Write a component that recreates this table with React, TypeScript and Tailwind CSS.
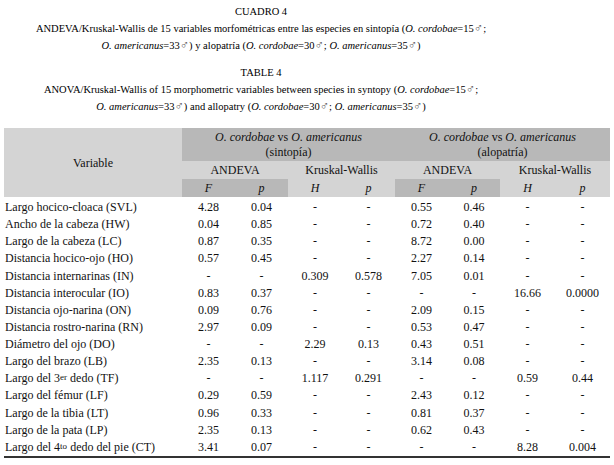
import React from 'react';

type Row = {
  label: React.ReactNode;
  values: string[];
};

const rows: Row[] = [
  { label: 'Largo hocico-cloaca (SVL)', values: ['4.28', '0.04', '-', '-', '0.55', '0.46', '-', '-'] },
  { label: 'Ancho de la cabeza (HW)', values: ['0.04', '0.85', '-', '-', '0.72', '0.40', '-', '-'] },
  { label: 'Largo de la cabeza (LC)', values: ['0.87', '0.35', '-', '-', '8.72', '0.00', '-', '-'] },
  { label: 'Distancia hocico-ojo (HO)', values: ['0.57', '0.45', '-', '-', '2.27', '0.14', '-', '-'] },
  { label: 'Distancia internarinas (IN)', values: ['-', '-', '0.309', '0.578', '7.05', '0.01', '-', '-'] },
  { label: 'Distancia interocular (IO)', values: ['0.83', '0.37', '-', '-', '-', '-', '16.66', '0.0000'] },
  { label: 'Distancia ojo-narina (ON)', values: ['0.09', '0.76', '-', '-', '2.09', '0.15', '-', '-'] },
  { label: 'Distancia rostro-narina (RN)', values: ['2.97', '0.09', '-', '-', '0.53', '0.47', '-', '-'] },
  { label: 'Diámetro del ojo (DO)', values: ['-', '-', '2.29', '0.13', '0.43', '0.51', '-', '-'] },
  { label: 'Largo del brazo (LB)', values: ['2.35', '0.13', '-', '-', '3.14', '0.08', '-', '-'] },
  {
    label: (
      <>
        Largo del 3<sup className="text-[9px] relative top-[-2px]">er</sup> dedo (TF)
      </>
    ),
    values: ['-', '-', '1.117', '0.291', '-', '-', '0.59', '0.44'],
  },
  { label: 'Largo del fémur (LF)', values: ['0.29', '0.59', '-', '-', '2.43', '0.12', '-', '-'] },
  { label: 'Largo de la tibia (LT)', values: ['0.96', '0.33', '-', '-', '0.81', '0.37', '-', '-'] },
  { label: 'Largo de la pata (LP)', values: ['2.35', '0.13', '-', '-', '0.62', '0.43', '-', '-'] },
  {
    label: (
      <>
        Largo del 4<sup className="text-[9px] relative top-[-2px]">to</sup> dedo del pie (CT)
      </>
    ),
    values: ['3.41', '0.07', '-', '-', '-', '-', '8.28', '0.004'],
  },
];

// thin outlined male sign, as in the original PDF export
const Male = () => (
  <span className="[font-family:'DejaVu_Sans',sans-serif] text-[12.5px] leading-none font-extralight text-[#555]">♂</span>
);

const Species = ({ children }: { children: React.ReactNode }) => <i>{children}</i>;

const Caption = ({ title, children }: { title: string; children: React.ReactNode }) => (
  <div className="w-[522px] text-center text-[10.5px] leading-[17px] text-black">
    <div>{title}</div>
    <div>{children}</div>
  </div>
);

export default function App() {
  const light = 'bg-[#d4d4d4]';
  const dark = 'bg-[#b8b8b8]';

  return (
    <div className="w-[614px] h-[465px] bg-white text-[#111] text-[12px] [font-family:'Liberation_Serif','Times_New_Roman',serif] pt-[3px]">
      <Caption title="CUADRO 4">
        ANDEVA/Kruskal-Wallis de 15 variables morfométricas entre las especies en sintopía (
        <Species>O. cordobae</Species>=15<Male />;
        <br />
        <Species>O. americanus</Species>=33<Male />) y alopatría (<Species>O. cordobae</Species>=30<Male />;{' '}
        <Species>O. americanus</Species>=35<Male />)
      </Caption>

      <div className="h-[10px]" />

      <Caption title="TABLE 4">
        ANOVA/Kruskal-Wallis of 15 morphometric variables between species in syntopy (
        <Species>O. cordobae</Species>=15<Male />;
        <br />
        <Species>O. americanus</Species>=33<Male />) and allopatry (<Species>O. cordobae</Species>=30<Male />;{' '}
        <Species>O. americanus</Species>=35<Male />)
      </Caption>

      <table className="ml-[4px] mt-[13px] w-[606px] table-fixed border-collapse border-b-2 border-[#333]">
        <colgroup>
          <col className="w-[178px]" />
          <col className="w-[53px]" />
          <col className="w-[53px]" />
          <col className="w-[54px]" />
          <col className="w-[53px]" />
          <col className="w-[53px]" />
          <col className="w-[52px]" />
          <col className="w-[55px]" />
          <col className="w-[55px]" />
        </colgroup>
        <thead>
          <tr className="h-[33px]">
            <th rowSpan={3} className={`${light} font-normal text-center`}>
              Variable
            </th>
            <th colSpan={4} className={`${dark} font-normal text-center leading-[15px]`}>
              <Species>O. cordobae</Species> vs <Species>O. americanus</Species>
              <br />
              (sintopía)
            </th>
            <th colSpan={4} className={`${dark} font-normal text-center leading-[15px]`}>
              <Species>O. cordobae</Species> vs <Species>O. americanus</Species>
              <br />
              (alopatría)
            </th>
          </tr>
          <tr className="h-[17px]">
            <th colSpan={2} className={`${light} font-normal`}>ANDEVA</th>
            <th colSpan={2} className={`${light} font-normal`}>Kruskal-Wallis</th>
            <th colSpan={2} className={`${light} font-normal`}>ANDEVA</th>
            <th colSpan={2} className={`${light} font-normal`}>Kruskal-Wallis</th>
          </tr>
          <tr className="h-[18px]">
            <th className={`${dark} font-normal italic`}>F</th>
            <th className={`${dark} font-normal italic`}>p</th>
            <th className={`${light} font-normal italic`}>H</th>
            <th className={`${light} font-normal italic`}>p</th>
            <th className={`${dark} font-normal italic`}>F</th>
            <th className={`${dark} font-normal italic`}>p</th>
            <th className={`${light} font-normal italic`}>H</th>
            <th className={`${light} font-normal italic`}>p</th>
          </tr>
        </thead>
        <tbody>
          <tr className="h-[2px]">
            <td colSpan={9} />
          </tr>
          {rows.map((row, i) => (
            <tr key={i} className="h-[17.14px] leading-[17px]">
              <td className="pl-[1px] whitespace-nowrap">{row.label}</td>
              {row.values.map((v, j) => (
                <td key={j} className="text-center">
                  {v}
                </td>
              ))}
            </tr>
          ))}
        </tbody>
      </table>
    </div>
  );
}
